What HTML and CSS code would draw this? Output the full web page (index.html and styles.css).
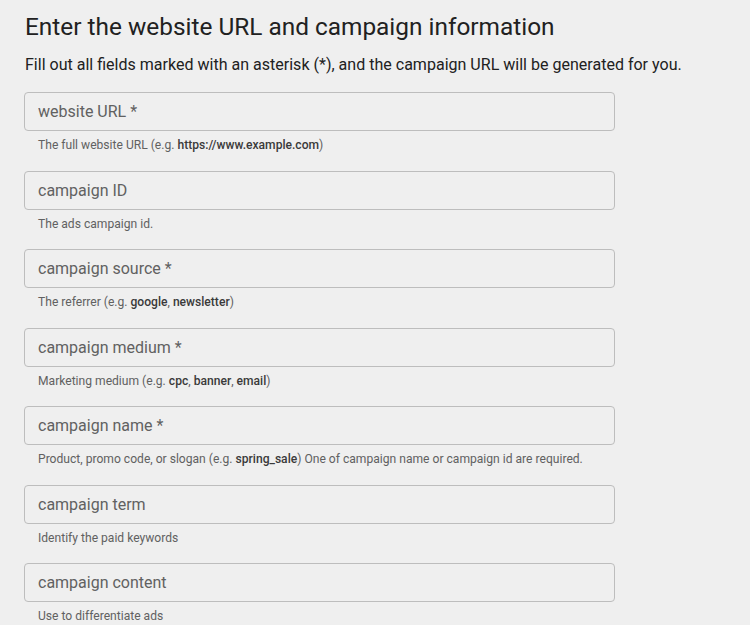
FILE: index.html
```html
<!DOCTYPE html>
<html>
<head>
<meta charset="utf-8">
<link rel="stylesheet" href="styles.css">
</head>
<body>
<main class="page">
  <h1 class="title">Enter the website URL and campaign information</h1>
  <p class="intro">Fill out all fields marked with an asterisk (*), and the campaign URL will be generated for you.</p>
  <div class="field">
    <input class="box" type="text" placeholder="website URL *">
    <div class="help">The full website URL (e.g. <b>https://www.example.com</b>)</div>
  </div>
  <div class="field">
    <input class="box" type="text" placeholder="campaign ID">
    <div class="help">The ads campaign id.</div>
  </div>
  <div class="field">
    <input class="box" type="text" placeholder="campaign source *">
    <div class="help">The referrer (e.g. <b>google</b>, <b>newsletter</b>)</div>
  </div>
  <div class="field">
    <input class="box" type="text" placeholder="campaign medium *">
    <div class="help">Marketing medium (e.g. <b>cpc</b>, <b>banner</b>, <b>email</b>)</div>
  </div>
  <div class="field">
    <input class="box" type="text" placeholder="campaign name *">
    <div class="help">Product, promo code, or slogan (e.g. <b>spring_sale</b>) One of campaign name or campaign id are required.</div>
  </div>
  <div class="field">
    <input class="box" type="text" placeholder="campaign term">
    <div class="help">Identify the paid keywords</div>
  </div>
  <div class="field">
    <input class="box" type="text" placeholder="campaign content">
    <div class="help">Use to differentiate ads</div>
  </div>
</main>
</body>
</html>
```
FILE: styles.css
```css
html, body {
  margin: 0;
  padding: 0;
  background: #efefef;
}
body {
  font-family: Roboto, "Liberation Sans", sans-serif;
  color: #212121;
}
.page {
  padding: 11px 0 0 24px;
}
.title {
  margin: 0 0 0 1px;
  font-size: 24.4px;
  line-height: 32px;
  font-weight: 400;
}
.intro {
  margin: 11.5px 0 17.5px 1px;
  font-size: 16.05px;
  line-height: 20px;
}
.field {
  margin-bottom: 17.5px;
}
.box {
  display: block;
  box-sizing: border-box;
  width: 591px;
  height: 39px;
  margin: 0;
  padding: 0 13px;
  border: 1px solid #bdbdbd;
  border-radius: 4px;
  background: #efefef;
  font-family: Roboto, "Liberation Sans", sans-serif;
  font-size: 16px;
  color: #333;
  outline: none;
}
.box::placeholder {
  color: #616161;
  opacity: 1;
}
.help {
  margin: 6px 0 0 14px;
  font-size: 12.1px;
  line-height: 16px;
  color: #616161;
}
.help b {
  font-weight: 500;
  color: #3a3a3a;
}
```
